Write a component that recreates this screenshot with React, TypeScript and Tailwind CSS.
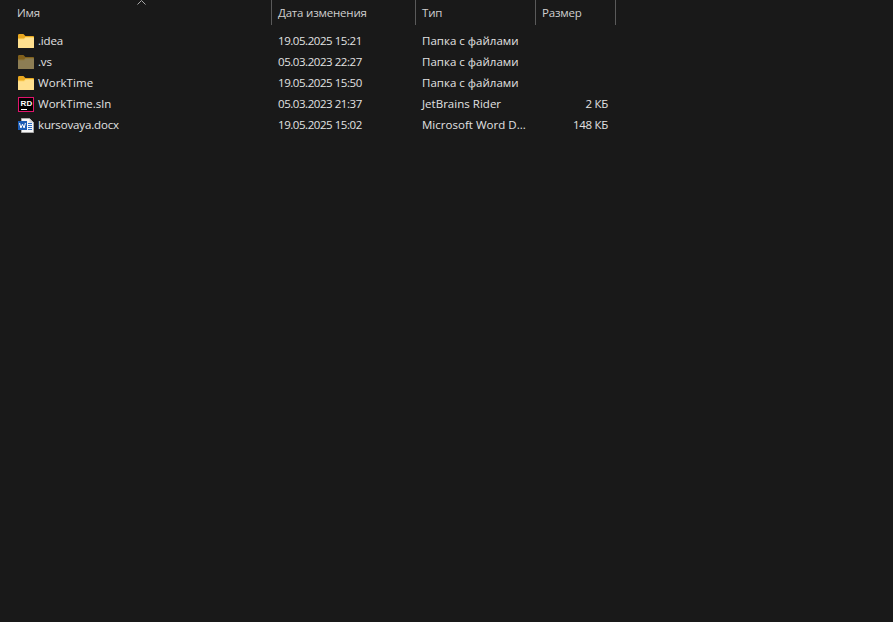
import React from 'react';

const FolderIcon = ({ dim }: { dim?: boolean }) => (
  <svg width="16" height="14" viewBox="0 0 16 14" className={dim ? 'opacity-50' : ''}>
    <path d="M0 1.5 C0 .6 .5 0 1.2 0 H5.4 L7.4 2 H15 C15.6 2 16 2.4 16 3 V6 H0 Z" fill="#e8a71f" />
    <path d="M0 4.5 H6 L7.4 3 H15 C15.6 3 16 3.4 16 4 V13 C16 13.6 15.6 14 15 14 H1 C.4 14 0 13.6 0 13 Z" fill="#ffd768" />
    <path d="M0 5.5 H6.2 L7.6 4 H16 V13 C16 13.6 15.6 14 15 14 H1 C.4 14 0 13.6 0 13 Z" fill="#ffe08f" />
  </svg>
);

const RiderIcon = () => (
  <svg width="16" height="15" viewBox="0 0 16 15" className="mt-[2px]">
    <rect x="0.5" y="0.5" width="15" height="14" fill="#000" stroke="#e0146c" />
    <rect x="3" y="12" width="6" height="1" fill="#fff" />
    <text x="2.6" y="9" fontSize="8" fontWeight="700" fill="#fff" fontFamily="Liberation Sans, sans-serif">RD</text>
  </svg>
);

const WordIcon = () => (
  <svg width="16" height="15" viewBox="0 0 16 15" className="mt-[2px]">
    <path d="M3.5 0.5 H11.5 L15.5 4.5 V14.5 H3.5 Z" fill="#f6f6f6" stroke="#a9a9a9" />
    <path d="M11.5 0.5 V4.5 H15.5 Z" fill="#d4d4d4" />
    <rect x="10" y="5" width="4" height="1" fill="#2b6cc4" />
    <rect x="10" y="7" width="4" height="1" fill="#2b6cc4" />
    <rect x="10" y="9" width="4" height="1" fill="#2b6cc4" />
    <rect x="10" y="11" width="4" height="1" fill="#2b6cc4" />
    <rect x="0" y="3" width="9" height="9" fill="#1b5cb5" />
    <path d="M1.6 5 L2.9 10 L4.5 6.2 L6.1 10 L7.4 5" fill="none" stroke="#fff" strokeWidth="1" />
  </svg>
);

const files = [
  { name: '.idea', date: '19.05.2025 15:21', type: 'Папка с файлами', size: '', icon: <FolderIcon />, fit: 'tracking-[-0.15px]' },
  { name: '.vs', date: '05.03.2023 22:27', type: 'Папка с файлами', size: '', icon: <FolderIcon dim />, fit: 'tracking-[-0.15px]' },
  { name: 'WorkTime', date: '19.05.2025 15:50', type: 'Папка с файлами', size: '', icon: <FolderIcon />, fit: 'tracking-[0.08px]' },
  { name: 'WorkTime.sln', date: '05.03.2023 21:37', type: 'JetBrains Rider', size: '2 КБ', icon: <RiderIcon />, fit: 'tracking-[0.02px]' },
  { name: 'kursovaya.docx', date: '19.05.2025 15:02', type: 'Microsoft Word D...', size: '148 КБ', icon: <WordIcon />, fit: 'tracking-[-0.15px]' },
];

export default function App() {
  return (
    <div className="w-[893px] h-[622px] overflow-hidden bg-[#191919] text-[#e2e2e2] text-[11.5px] leading-[16px] font-['Open_Sans','Noto_Sans',sans-serif]">
      {/* header */}
      <div className="relative flex h-[25px] items-center text-[#d0d0d0] tracking-[-0.2px]">
        <div className="w-[272px] h-full border-r border-[#5a5a5a] pl-[17px] flex items-center">Имя</div>
        <div className="w-[144px] h-full border-r border-[#5a5a5a] pl-[6px] flex items-center">Дата изменения</div>
        <div className="w-[120px] h-full border-r border-[#5a5a5a] pl-[6px] flex items-center">Тип</div>
        <div className="w-[80px] h-full border-r border-[#5a5a5a] pl-[6px] flex items-center">Размер</div>
        <svg width="9" height="5" viewBox="0 0 9 5" className="absolute left-[137px] top-0">
          <path d="M0.5 4.5 L4.5 0.5 L8.5 4.5" fill="none" stroke="#a8a8a8" />
        </svg>
      </div>
      {/* rows */}
      <div className="pt-[5px]">
        {files.map((f) => (
          <div key={f.name} className="flex h-[21px] items-center">
            <div className={`w-[272px] pl-[18px] flex items-center gap-[4px] ${f.fit}`}>
              <span className="w-[16px] flex justify-center">{f.icon}</span>
              <span>{f.name}</span>
            </div>
            <div className="w-[144px] pl-[6px] tracking-[-0.45px]">{f.date}</div>
            <div className="w-[120px] pl-[6px] tracking-[0.02px]">{f.type}</div>
            <div className="w-[72px] text-right tracking-[-0.3px]">{f.size}</div>
          </div>
        ))}
      </div>
    </div>
  );
}
